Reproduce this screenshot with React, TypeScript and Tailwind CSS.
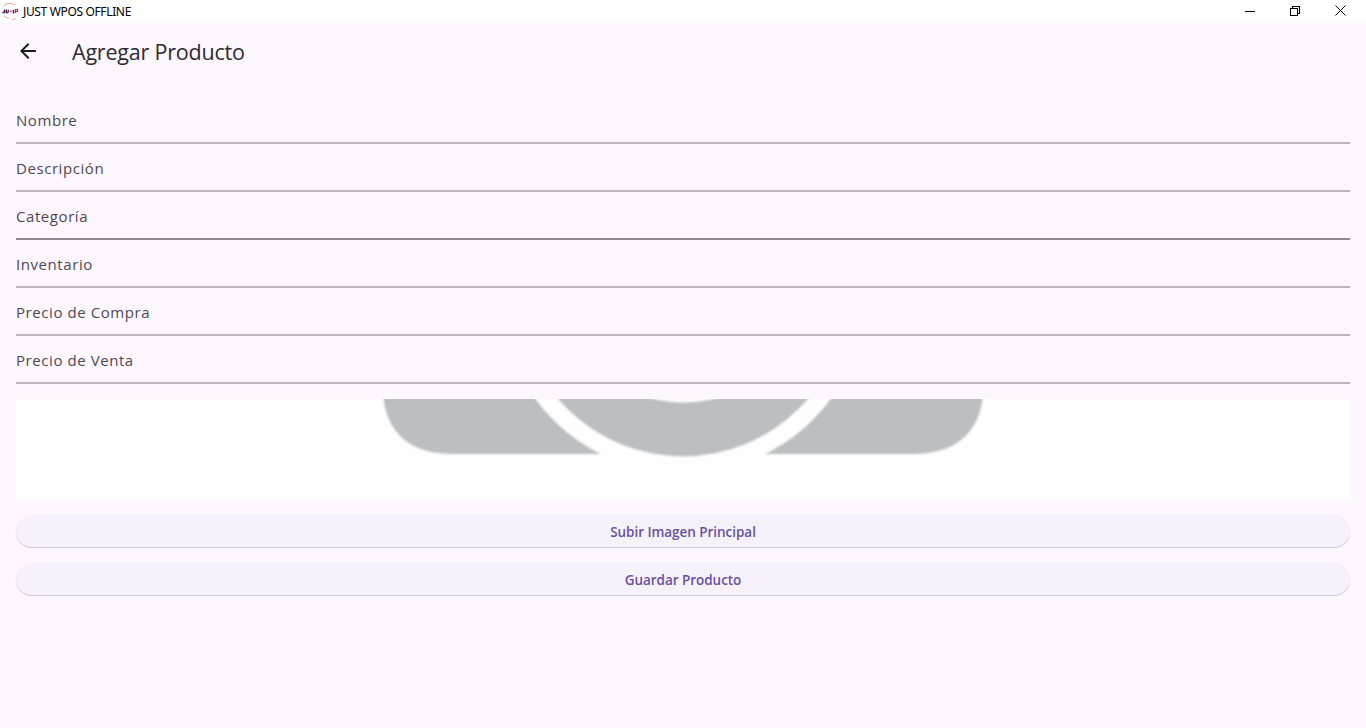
const fields = [
  { label: "Nombre", strong: false },
  { label: "Descripción", strong: false },
  { label: "Categoría", strong: true },
  { label: "Inventario", strong: false },
  { label: "Precio de Compra", strong: false },
  { label: "Precio de Venta", strong: false },
];

function TitleBar() {
  return (
    <header className="flex h-[23px] shrink-0 items-center bg-white text-black">
      <svg className="ml-[2px] mb-[2px]" width="17" height="18" viewBox="0 0 17 18" fill="none">
        <path d="M1.500 4.500C4 1 9 .5 13 3M2 13.500c2 2 4 2.500 5 2.500M10 17.500c2 0 3-.5 4-1" stroke="#f3a08f" strokeWidth="1" />
        <path d="M0.500 10.500h2v-3M4.500 7.500v3h2M11.500 11.500V8" stroke="#372451" strokeWidth="1.500" />
        <path d="M8 9.500h1.500" stroke="#5a3a9c" strokeWidth="1.500" />
        <path d="M6.500 7.500v3M13.500 11V7.500h2v2h-2" stroke="#c8283c" strokeWidth="1.200" />
      </svg>
      <span className="ml-[4px] whitespace-nowrap font-['Noto_Sans',sans-serif] text-[12px] leading-[22px] tracking-[-0.35px]">JUST WPOS OFFLINE</span>
      <div className="ml-auto mr-[20px] flex h-[20px] items-center">
        <svg className="mr-[34px]" width="11" height="11" viewBox="0 0 11 11" fill="none" stroke="black" shapeRendering="crispEdges"><path d="M1 5.500h10" /></svg>
        <svg className="mr-[35px]" width="11" height="11" viewBox="0 0 11 11" fill="none" stroke="black" shapeRendering="crispEdges"><path d="M1.500 2.500h7v7h-7zM3.500 2.500v-2h7v7h-2" /></svg>
        <svg className="mb-[2px]" width="11" height="11" viewBox="0 0 11 11" fill="none" stroke="black"><path d="m.5.5 10 10M10.500.5l-10 10" /></svg>
      </div>
    </header>
  );
}

function Preview() {
  return (
    <svg className="mt-[15px] block h-[100px] w-full bg-[#fefefe]" viewBox="0 0 1334 100">
      <defs>
        <filter id="soften" x="-5%" y="-5%" width="110%" height="110%">
          <feGaussianBlur stdDeviation="1.3" />
        </filter>
      </defs>
      <g filter="url(#soften)">
        <path d="M367-20V-5C370 35 395 55 437 55H897C938 55 964 35 967-5V-20Z" fill="#bdbebf" />
        <circle cx="667" cy="-109" r="183.500" fill="#fefefe" />
        <circle cx="667" cy="-107" r="164.500" fill="#bdbebf" />
        <circle cx="667.500" cy="-125" r="128.500" fill="#fefefe" />
      </g>
    </svg>
  );
}

function ActionButton({ label }: { label: string }) {
  return (
    <button className="flex h-8 w-full items-center justify-center rounded-full bg-[#f7f2fa] pt-[3px] text-[13.5px] font-semibold tracking-[-0.04px] text-[#6750a4] shadow-[0_1px_1px_rgba(0,0,0,0.2)]">
      {label}
    </button>
  );
}

export default function App() {
  return (
    <div className="flex h-[728px] w-full flex-col overflow-hidden bg-[#fef7ff] font-['Open_Sans','Noto_Sans',sans-serif]">
      <TitleBar />
      <div className="flex h-14 shrink-0 items-center pl-4">
        <svg width="24" height="24" viewBox="0 0 24 24" fill="#1d1b20">
          <path d="M20 11H7.830l5.590-5.590L12 4l-8 8 8 8 1.410-1.410L7.830 13H20v-2z" />
        </svg>
        <h1 className="ml-8 pt-[2px] text-[21.5px] leading-7 tracking-[-0.2px] text-[#2d2b30]">Agregar Producto</h1>
      </div>
      <main className="px-4 pt-[17px]">
        {fields.map((f) => (
          <label key={f.label} className={`flex h-12 items-center border-b-2 pt-[3px] text-[15px] tracking-[0.57px] text-[#4d4953] ${f.strong ? "border-[#8f8992]" : "border-[#bbb4bd]"}`}>
            {f.label}
          </label>
        ))}
        <Preview />
        <div className="mt-4 flex flex-col gap-4">
          <ActionButton label="Subir Imagen Principal" />
          <ActionButton label="Guardar Producto" />
        </div>
      </main>
    </div>
  );
}
